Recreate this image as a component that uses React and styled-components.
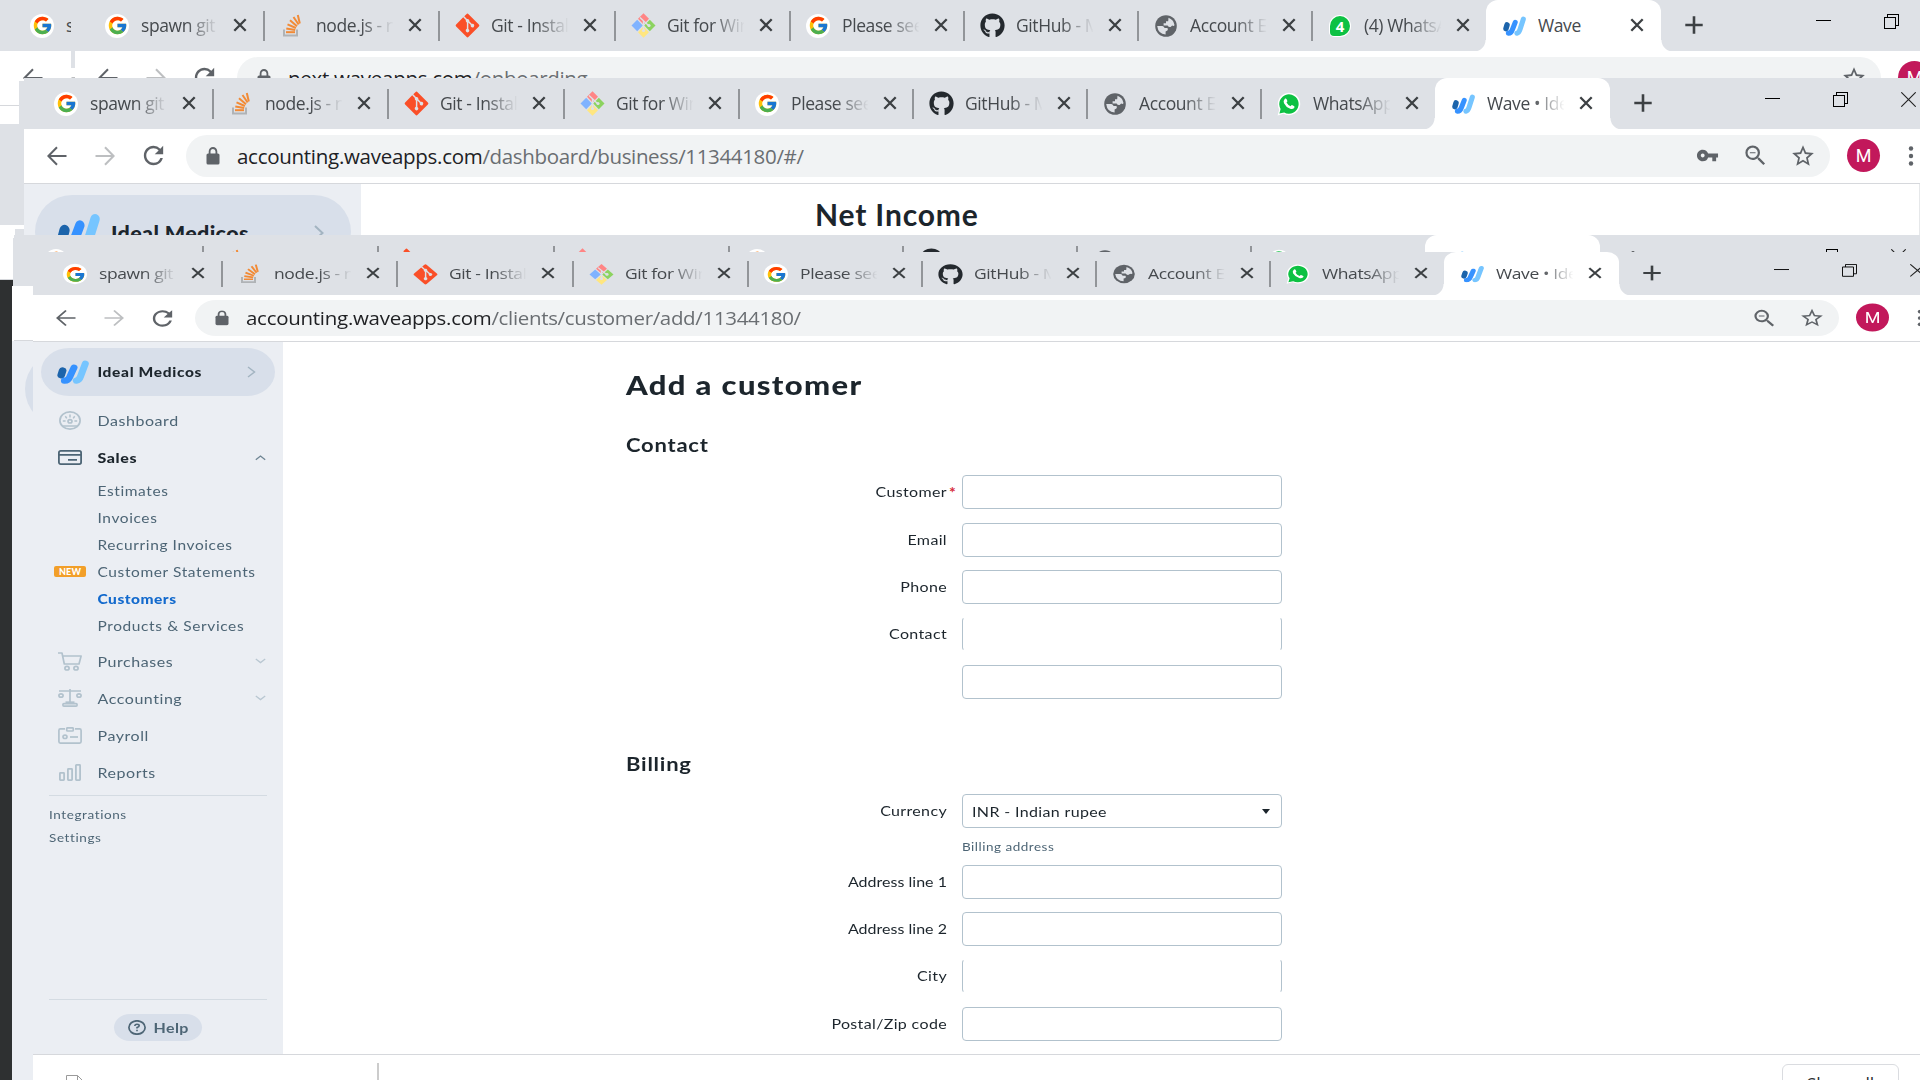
import React from "react";
import styled, { createGlobalStyle, css, ThemeProvider } from "styled-components";
import { FcGoogle } from "react-icons/fc";
import { FaGitAlt, FaGithub } from "react-icons/fa";
import { MdVpnKey, MdZoomOut, MdStarOutline, MdRefresh } from "react-icons/md";

const Global = createGlobalStyle`
  *, *::before, *::after { box-sizing: border-box; }
  body { margin: 0; background: #2e3031; }
`;

const UI = `"Open Sans", "Noto Sans", sans-serif`;
const BRAND = `Lato, "Open Sans", sans-serif`;

const tall = { k: 1, strip: 51, bar: 54, pill: 42, sepTop: 11, sepH: 30, ctlTop: 14 };
const squat = { k: 0.85, strip: 43, bar: 46, pill: 36, sepTop: 9, sepH: 26, ctlTop: 12 };

/* ---------- desktop and window frames ---------- */

const Desktop = styled.div`
  position: relative;
  width: 1920px;
  height: 1080px;
  overflow: hidden;
  background: #2e3031;
  font-family: ${UI};
`;

const Frame = styled.section`
  position: absolute;
  left: ${(p) => p.$x}px;
  top: ${(p) => p.$y}px;
  width: 1920px;
  height: ${(p) => p.$h}px;
  display: flex;
  flex-direction: column;
  background: #fff;
`;

const Edge = styled.i`
  position: absolute;
  left: ${(p) => p.$x}px;
  top: ${(p) => p.$y}px;
  width: ${(p) => p.$w}px;
  height: ${(p) => p.$h}px;
  background: ${(p) => p.$c || "#dee1e6"};
`;

const BackStrip = styled.div`
  height: 101px;
  background: #dee1e6;
`;
const BackBar = styled.div`
  height: 55px;
  background: #fff;
  border-bottom: 1px solid #d6d8dc;
`;

/* ---------- tab strip ---------- */

const Strip = styled.div`
  flex: none;
  display: flex;
  height: ${(p) => p.theme.strip}px;
  padding-left: 14px;
  background: #dee1e6;
`;

const Tab = styled.div`
  position: relative;
  flex: none;
  display: flex;
  align-items: center;
  width: ${(p) => p.$w}px;
  height: 100%;
  padding-left: 16px;
  ${(p) =>
    p.$active
      ? css`
          background: #fff;
          border-radius: 12px 12px 0 0 / ${12 * p.theme.k}px ${12 * p.theme.k}px 0 0;
          &::before,
          &::after {
            content: "";
            position: absolute;
            bottom: 0;
            width: 12px;
            height: 11px;
          }
          &::before {
            left: -12px;
            background: radial-gradient(circle at 0 0, transparent 11px, #fff 12px);
          }
          &::after {
            right: -12px;
            background: radial-gradient(circle at 100% 0, transparent 11px, #fff 12px);
          }
        `
      : ""}
`;

const Separator = styled.span`
  position: absolute;
  right: -1px;
  top: ${(p) => p.theme.sepTop}px;
  width: 2px;
  height: ${(p) => p.theme.sepH}px;
  background: #929599;
`;

const Glyph = styled.span`
  flex: none;
  display: flex;
  align-items: center;
  justify-content: center;
  width: ${(p) => p.$s || 24}px;
  height: ${(p) => p.$s || 24}px;
  color: ${(p) => p.$c || "#5f6368"};
  transform: scaleY(${(p) => p.theme.k});
  svg {
    display: block;
    flex: none;
  }
`;

const Disc = styled(Glyph)`
  background: #fff;
  border-radius: 50%;
`;

const Title = styled.span`
  flex: none;
  width: 77px;
  height: 26px;
  margin: -2px 0 0 12px;
  overflow: hidden;
  white-space: nowrap;
  font-size: 17.5px;
  line-height: 26px;
  letter-spacing: -0.4px;
  color: #45494d;
  transform: scaleY(${(p) => p.theme.k});
  mask-image: ${(p) => (p.$full ? "none" : "linear-gradient(90deg, #000 58%, transparent 101%)")};
`;

const CloseSlot = styled(Glyph)`
  margin: -1px 8px 0 13px;
`;

const NewTab = styled(Glyph)`
  margin: -1px 0 0 21px;
  align-self: center;
`;

const Controls = styled.div`
  display: flex;
  align-items: flex-start;
  margin-left: 110px;
  padding-top: ${(p) => p.theme.ctlTop}px;
  gap: 53px;
  svg {
    display: block;
    height: ${(p) => 15 * p.theme.k}px;
  }
`;

/* ---------- toolbar ---------- */

const Toolbar = styled.div`
  flex: none;
  display: flex;
  align-items: center;
  height: ${(p) => p.theme.bar + 1}px;
  padding: 0 0 1px 21px;
  background: #fff;
  border-bottom: 1px solid #d6d8dc;
`;

const NavButtons = styled.div`
  display: flex;
  gap: 24px;
  width: 141px;
`;

const Address = styled.div`
  display: flex;
  align-items: center;
  width: 1644px;
  height: ${(p) => p.theme.pill}px;
  padding: 0 15px 0 15px;
  background: #f1f3f4;
  border-radius: 21px / ${(p) => p.theme.pill / 2}px;
`;

const Url = styled.span`
  flex: 1;
  margin-left: 12px;
  white-space: nowrap;
  font-size: 20.5px;
  line-height: 30px;
  letter-spacing: -0.34px;
  color: #6a6e72;
  transform: scaleY(${(p) => p.theme.k});
  transform-origin: 0 50%;
  b {
    font-weight: 400;
    letter-spacing: -0.28px;
    color: #202124;
  }
`;

const AddressTools = styled.div`
  display: flex;
  gap: 24px;
`;

const Avatar = styled.span`
  flex: none;
  width: 33px;
  height: 33px;
  margin-left: 17px;
  border-radius: 50%;
  background: #c2185b;
  color: #fff;
  font: 400 18px/33px Roboto, sans-serif;
  text-align: center;
  transform: scaleY(${(p) => p.theme.k});
`;

const Menu = styled(Glyph)`
  margin-left: 19px;
`;

/* ---------- drawings ---------- */

const WaveLogo = ({ w, h }) => (
  <svg width={w} height={h} viewBox="0 0 32 27" preserveAspectRatio="none">
    <path d="M5.6 12 L4.2 17" stroke="#1c64ab" strokeWidth="7.6" strokeLinecap="round" fill="none" />
    <path d="M17 8.6 L13 18.5 Q11.3 23.4 7.4 23.2" stroke="#3692ff" strokeWidth="7" strokeLinecap="round" fill="none" />
    <path d="M28.3 4.2 L23.6 18.3 Q22.3 22.6 19.3 23.2" stroke="#76c5ff" strokeWidth="7" strokeLinecap="round" fill="none" />
  </svg>
);

const StackLogo = () => (
  <svg width="20" height="24" viewBox="0 0 20 24">
    <path d="M2 15.5 V21.5 H15 V15.5" fill="none" stroke="#b0b3b6" strokeWidth="2" />
    <g stroke="#f28a35" strokeWidth="2" fill="none">
      <path d="M4 18.2 H13" />
      <path d="M4.3 14.4 L13.2 16" />
      <path d="M5.5 10.4 L13.9 14" />
      <path d="M8 6.3 L15 12.3" />
      <path d="M11.5 3 L16.6 10.5" />
      <path d="M15.8 1 L17.8 9.5" />
    </g>
  </svg>
);

const GitWinLogo = () => (
  <svg width="25" height="25" viewBox="0 0 25 25">
    <path d="M12.5 0.3 L18 5.8 L12.5 11.5 L7 5.8 Z" fill="#ff8585" />
    <path d="M6.2 6.8 L11.8 12.5 L6.2 18.2 L0.5 12.5 Z" fill="#80b3ff" />
    <path d="M18.8 6.8 L24.5 12.5 L18.8 18.2 L13.2 12.5 Z" fill="#8cd35f" />
    <path d="M12.5 13.5 L18 19.2 L12.5 24.7 L7 19.2 Z" fill="#ffe680" />
    <path d="M9 4.5 L18 13 M12.5 8 V18" stroke="#dee1e6" strokeWidth="1.4" />
    <circle cx="12.5" cy="17.5" r="1.6" fill="#dee1e6" />
    <circle cx="18" cy="12.5" r="1.6" fill="#dee1e6" />
  </svg>
);

const Globe = () => (
  <svg width="24" height="24" viewBox="0 0 24 24">
    <circle cx="12" cy="12" r="10.8" fill="#5f6368" />
    <path
      d="M14.5 3.8 Q19.6 5.6 20.5 11 Q20 12.4 18.2 11.6 L16.6 13 Q14.6 13.4 13.6 11.4 H9.6 V9.2 H12 V7.2 H14.2 Z"
      fill="#dee1e6"
    />
    <path d="M3.2 12 H8.4 Q10.2 12.4 10.6 14 H13.4 Q14.4 15 13.4 16.6 L11.6 17.4 V20.6 Q4.2 20 3.2 12 Z" fill="#dee1e6" />
  </svg>
);

const ChatLogo = () => (
  <svg width="24" height="24" viewBox="0 0 24 24">
    <path d="M0.6 23.4 L2.2 17.4 A11.2 11.2 0 1 1 6.6 21.8 Z" fill="#fff" />
    <path d="M2.4 21.6 L3.6 17 A9.7 9.7 0 1 1 7.2 20.5 Z" fill="#0dc143" />
    <path
      d="M8 6.6 Q8.8 6 9.5 7 L10.4 9 Q10.4 9.8 9.5 10.6 Q10.9 13.2 13.6 14.3 Q14.4 13.1 15 13.1 L17.3 14.3 Q17.9 15.1 16.9 16.2 Q15.4 17.5 13.2 16.7 Q8.9 15.2 7 11.2 Q6.1 8.6 8 6.6 Z"
      fill="#fff"
    />
  </svg>
);

const Lock = () => (
  <svg width="14" height="18" viewBox="0 0 14 18">
    <rect x="0.5" y="6.5" width="13" height="11" rx="1.6" fill="#5f6368" />
    <path d="M3.6 7 V4.4 A3.4 3.4 0 0 1 10.4 4.4 V7" fill="none" stroke="#5f6368" strokeWidth="1.8" />
  </svg>
);

const CountBubble = styled.span`
  display: flex;
  align-items: center;
  justify-content: center;
  width: 20px;
  height: 20px;
  border-radius: 50% 50% 50% 4px;
  background: #0dc143;
  box-shadow: 0 0 0 1px #fff;
  color: #fff;
  font: 700 15px/20px "Open Sans", sans-serif;
`;

const Cross = () => (
  <svg width="14" height="14" viewBox="0 0 14 14">
    <path d="M1.3 1.3 L12.7 12.7 M12.7 1.3 L1.3 12.7" stroke="#3c4043" strokeWidth="2.3" />
  </svg>
);

const Plus = () => (
  <svg width="18" height="18" viewBox="0 0 18 18">
    <path d="M9 0.3 V17.7 M0.3 9 H17.7" stroke="#3c4043" strokeWidth="2.6" />
  </svg>
);

const Arrow = ({ back }) => (
  <svg width="20" height="20" viewBox="0 0 20 20">
    <path
      d={back ? "M19.5 10 H1.5 M10 1.2 L1.4 10 L10 18.8" : "M0.5 10 H18.5 M10 1.2 L18.6 10 L10 18.8"}
      fill="none"
      stroke={back ? "#5f6368" : "#bdbfc1"}
      strokeWidth="2"
    />
  </svg>
);

const Dots = () => (
  <svg width="6" height="20" viewBox="0 0 6 20">
    <circle cx="3" cy="2.5" r="2.2" fill="#5f6368" />
    <circle cx="3" cy="10" r="2.2" fill="#5f6368" />
    <circle cx="3" cy="17.5" r="2.2" fill="#5f6368" />
  </svg>
);

const WinControls = () => (
  <Controls>
    <svg width="15" viewBox="0 0 15 15" preserveAspectRatio="none" shapeRendering="crispEdges">
      <path d="M0 6.5 H15" stroke="#000" />
    </svg>
    <svg width="15" viewBox="0 0 15 15" preserveAspectRatio="none" shapeRendering="crispEdges">
      <path d="M0.5 3.5 H11.5 V14.5 H0.5 Z M3.5 3.5 V0.5 H14.5 V11.5 H11.5" fill="none" stroke="#000" />
    </svg>
    <svg width="15" viewBox="0 0 15 15" preserveAspectRatio="none">
      <path d="M0.3 0.3 L14.7 14.7 M14.7 0.3 L0.3 14.7" stroke="#222" strokeWidth="1.1" />
    </svg>
  </Controls>
);

/* ---------- browser chrome ---------- */

const baseTabs = [
  { w: 175, title: "spawn git", icon: "google" },
  { w: 175, title: "node.js - n", icon: "stack" },
  { w: 176, title: "Git - Install", icon: "git" },
  { w: 175, title: "Git for Win", icon: "gitwin" },
  { w: 174, title: "Please see", icon: "google" },
  { w: 174, title: "GitHub - M", icon: "github" },
  { w: 174, title: "Account E", icon: "globe" },
];

const favicons = {
  google: <Disc><FcGoogle size={21} /></Disc>,
  stack: <Glyph><StackLogo /></Glyph>,
  git: <Glyph $c="#fa4f28"><FaGitAlt size={27} /></Glyph>,
  gitwin: <Glyph><GitWinLogo /></Glyph>,
  github: <Glyph $c="#24292e"><FaGithub size={25} /></Glyph>,
  globe: <Glyph><Globe /></Glyph>,
  whatsapp: <Glyph><ChatLogo /></Glyph>,
  count: <Glyph><CountBubble>4</CountBubble></Glyph>,
  wave: <Glyph><WaveLogo w={23} h={20} /></Glyph>,
};

const BackTools = () => (
  <NavButtons>
    <Glyph><Arrow back /></Glyph>
    <Glyph><Arrow /></Glyph>
    <Glyph><MdRefresh size={29} /></Glyph>
  </NavButtons>
);

function Chrome({ host, path, chat = "WhatsApp", chatIcon = "whatsapp", current = "Wave • Ideal", tools, bare }) {
  const tabs = [...baseTabs, { w: 174, title: chat, icon: chatIcon, last: true }];
  return (
    <>
      <Strip>
        {tabs.map((t, i) => (
          <Tab key={i} $w={t.w}>
            {favicons[t.icon]}
            <Title>{!bare && t.title}</Title>
            <CloseSlot $s={18}><Cross /></CloseSlot>
            {!t.last && <Separator />}
          </Tab>
        ))}
        <Tab $w={175} $active>
          {favicons.wave}
          <Title $full={current === "Wave"}>{!bare && current}</Title>
          <CloseSlot $s={18}><Cross /></CloseSlot>
        </Tab>
        <NewTab><Plus /></NewTab>
        <WinControls />
      </Strip>
      <Toolbar>
        {!bare && (
          <>
            <BackTools />
            <Address>
              <Glyph><Lock /></Glyph>
              <Url><b>{host}</b>{path}</Url>
              <AddressTools>
                {tools.includes("key") && <Glyph><MdVpnKey size={23} /></Glyph>}
                {tools.includes("zoom") && <Glyph><MdZoomOut size={27} /></Glyph>}
                <Glyph><MdStarOutline size={26} /></Glyph>
              </AddressTools>
            </Address>
            <Avatar>M</Avatar>
            <Menu><Dots /></Menu>
          </>
        )}
      </Toolbar>
    </>
  );
}

const SliverTitle = styled(Title)`
  width: 5px;
  mask-image: none;
`;

/* ---------- dashboard page ---------- */

const DashBody = styled.div`
  flex: 1;
  display: flex;
`;
const DashSide = styled.div`
  width: 337px;
  padding: 11px 10px 0 11px;
  background: #ebeef3;
`;
const DashPill = styled.div`
  display: flex;
  align-items: center;
  height: 74px;
  padding: 0 27px 0 22px;
  border-radius: 37px;
  background: #d8dfea;
`;
const DashName = styled.span`
  flex: 1;
  padding: 2px 0 0 11px;
  white-space: nowrap;
  font: 900 21.5px/30px ${BRAND};
  letter-spacing: 0.35px;
  color: #1c252c;
`;
const DashLogo = styled.span`
  padding-top: 6px;
`;
const DashChevron = styled.span`
  padding-top: 6px;
`;
const DashMain = styled.div`
  flex: 1;
  padding: 8px 0 0 454px;
`;
const NetIncome = styled.div`
  font: 700 30px/44px ${BRAND};
  letter-spacing: 0.85px;
  color: #1c252c;
`;

function Dashboard({ bare }) {
  return (
    <DashBody>
      <DashSide>
        <DashPill>
          {!bare && (
            <>
              <DashLogo><WaveLogo w={43} h={39} /></DashLogo>
              <DashName>Ideal Medicos</DashName>
              <DashChevron>
                <svg width="10" height="16" viewBox="0 0 10 16">
                  <path d="M1 1 L8.5 8 L1 15" fill="none" stroke="#a3b4c1" strokeWidth="2" />
                </svg>
              </DashChevron>
            </>
          )}
        </DashPill>
      </DashSide>
      <DashMain>{!bare && <NetIncome>Net Income</NetIncome>}</DashMain>
    </DashBody>
  );
}

/* ---------- customer page ---------- */

const Page = styled.div`
  flex: none;
  display: flex;
  height: 712px;
  background: #fff;
`;

const Side = styled.nav`
  display: flex;
  flex-direction: column;
  width: 250px;
  padding: 6px 8px 0;
  background: #ebeef3;
  font-family: ${BRAND};
  color: #4d6575;
`;

const Text = styled.span`
  display: inline-block;
  white-space: nowrap;
  transform: scaleY(0.85);
`;

const BizPill = styled.div`
  flex: none;
  display: flex;
  align-items: center;
  height: 48px;
  margin-bottom: 6px;
  padding: 0 19px 0 16px;
  border-radius: 28px / 24px;
  background: #d8dfea;
  svg { display: block; }
`;
const BizName = styled(Text)`
  flex: 1;
  margin-left: 8.5px;
  font-size: 15.5px;
  font-weight: 900;
  letter-spacing: 0.65px;
  color: #1c252c;
`;

const NavRow = styled.div`
  flex: none;
  display: flex;
  align-items: center;
  height: 37.1px;
  padding: 0 9px 0 16px;
  font-size: 16px;
  letter-spacing: ${(p) => (p.$on ? 0.6 : 0.55)}px;
  font-weight: ${(p) => (p.$on ? 900 : 400)};
  color: ${(p) => (p.$on ? "#1c252c" : "#4d6575")};
  svg { display: block; }
`;
const NavIcon = styled.span`
  display: flex;
  justify-content: center;
  width: 26px;
  color: ${(p) => (p.$on ? "#4d6575" : "#b2c2cd")};
`;
const NavLabel = styled(Text)`
  flex: 1;
  margin-left: 14.5px;
`;

const SubList = styled.div`
  flex: none;
  margin: 1px 0 3.5px;
`;
const SubRow = styled.div`
  display: flex;
  align-items: center;
  height: 27px;
  font-size: 15.5px;
  letter-spacing: ${(p) => (p.$on ? 0.5 : 0.6)}px;
  font-weight: ${(p) => (p.$on ? 900 : 400)};
  color: ${(p) => (p.$on ? "#136acd" : "#4d6575")};
`;
const BadgeSlot = styled.span`
  display: flex;
  width: 56.5px;
  padding-left: 13px;
`;
const Badge = styled.span`
  width: 32px;
  height: 11px;
  border-radius: 2px;
  background: #f29f29;
  color: #fff;
  font-size: 9px;
  font-weight: 900;
  line-height: 11.5px;
  text-align: center;
  letter-spacing: 0.2px;
`;

const Rule = styled.hr`
  flex: none;
  width: 218px;
  height: 1px;
  margin: ${(p) => p.$top}px 8px 8px;
  border: 0;
  background: #d4dbe2;
`;
const MinorLink = styled.div`
  height: 23px;
  padding-left: 8px;
  font-size: 13.5px;
  line-height: 23px;
  letter-spacing: 0.6px;
`;
const Spacer = styled.div`
  flex: 1;
`;
const HelpButton = styled.div`
  flex: none;
  display: flex;
  align-items: center;
  align-self: center;
  width: 88px;
  height: 27px;
  margin: 6px 0 13px;
  padding-left: 14px;
  border-radius: 16px / 13.5px;
  background: #d8dfea;
  font-size: 16px;
  font-weight: 700;
  letter-spacing: 0.4px;
  gap: 7.5px;
`;

const Content = styled.main`
  flex: 1;
  padding: 25px 0 0 343px;
  font-family: ${BRAND};
  color: #1c252c;
`;
const H1 = styled.h1`
  height: 36px;
  margin: 0 0 27px;
  font-size: 31px;
  font-weight: 900;
  line-height: 36px;
  letter-spacing: 1.35px;
`;
const H2 = styled.h2`
  height: 30px;
  margin: ${(p) => p.$top || 0}px 0 ${(p) => p.$bottom}px;
  font-size: 22px;
  font-weight: 700;
  line-height: 30px;
  letter-spacing: 0.75px;
`;
const Row = styled.div`
  display: grid;
  grid-template-columns: 321px 320px;
  column-gap: 15px;
  height: ${(p) => p.$pitch}px;
`;
const Label = styled.label`
  position: relative;
  height: 34px;
  font-size: 16px;
  line-height: 33px;
  letter-spacing: ${(p) => (p.$tight ? 0.02 : 0.35)}px;
  text-align: right;
`;
const Star = styled.em`
  position: absolute;
  left: 100%;
  top: 0;
  margin-left: 2px;
  font-style: normal;
  font-weight: 700;
  color: #d62d3a;
`;
const Field = styled.div`
  display: flex;
  align-items: center;
  justify-content: space-between;
  height: 34px;
  padding: 0 11px 0 9px;
  border: 1px solid #b2c2cd;
  border-radius: 4px;
  font-size: 16px;
  letter-spacing: 0.35px;
  ${(p) =>
    p.$open &&
    css`
      border-top-color: transparent;
      border-bottom-color: transparent;
    `}
`;
const Hint = styled.div`
  grid-column: 2;
  font-size: 13.5px;
  line-height: 18px;
  letter-spacing: 0.5px;
  color: #4d6575;
`;

const Shelf = styled.footer`
  flex: none;
  display: flex;
  justify-content: space-between;
  height: 60px;
  border-top: 1px solid #d6d8dc;
  background: #fff;
`;
const Download = styled.div`
  display: flex;
  width: 346px;
  height: 46px;
  margin-top: 8px;
  padding: 12px 0 0 33px;
  border-right: 2px solid #ccc;
`;
const ShelfEnd = styled.div`
  margin: 9px 54px 0 0;
`;
const ShowAll = styled.div`
  width: 117px;
  height: 40px;
  border: 1px solid #dadce0;
  border-radius: 6px;
  font: 500 17.5px/38px ${UI};
  color: #2b2e31;
  text-align: center;
`;

const icons = {
  dash: (
    <svg width="22" height="19" viewBox="0 0 22 19" fill="none" stroke="currentColor" strokeWidth="1.7">
      <ellipse cx="11" cy="9.5" rx="10.1" ry="8.6" />
      <ellipse cx="11" cy="10.3" rx="2" ry="1.7" />
      <path d="M3.5 15 H18.5 M11 3.6 V6.6 M6.3 5.3 L7.8 7.4 M15.7 5.3 L14.2 7.4 M3.8 10 H6.6 M18.2 10 H15.4" strokeWidth="1.5" />
    </svg>
  ),
  card: (
    <svg width="24" height="15" viewBox="0 0 24 15" fill="none" stroke="currentColor" strokeWidth="1.8">
      <rect x="0.9" y="0.9" width="22.2" height="13.2" rx="1.8" />
      <path d="M1 4.8 H23 M10 9.8 H19" />
    </svg>
  ),
  cart: (
    <svg width="24" height="19" viewBox="0 0 24 19" fill="none" stroke="currentColor" strokeWidth="1.7">
      <path d="M0 1 H4 L6.3 12 H21 L23.1 4 H5" strokeLinejoin="round" />
      <ellipse cx="9" cy="16.2" rx="2.1" ry="1.8" />
      <ellipse cx="18" cy="16.2" rx="2.1" ry="1.8" />
    </svg>
  ),
  scale: (
    <svg width="24" height="18" viewBox="0 0 24 18" fill="none" stroke="currentColor" strokeWidth="1.7">
      <path d="M1 2 H23 M12 0 V13" />
      <ellipse cx="3" cy="6.5" rx="2.1" ry="1.7" />
      <ellipse cx="21" cy="6.5" rx="2.1" ry="1.7" />
      <path d="M7.5 13.2 H16.5" />
      <rect x="4.9" y="14.7" width="14.2" height="2.4" rx="1" />
    </svg>
  ),
  badge: (
    <svg width="24" height="17" viewBox="0 0 24 17" fill="none" stroke="currentColor" strokeWidth="1.7">
      <path d="M7 1.9 H2.4 Q0.9 1.9 0.9 3.4 V14.6 Q0.9 16.1 2.4 16.1 H21.6 Q23.1 16.1 23.1 14.6 V3.4 Q23.1 1.9 21.6 1.9 H17" />
      <rect x="8.7" y="0.8" width="6.6" height="3.2" rx="1" />
      <ellipse cx="7" cy="9.8" rx="2" ry="1.7" />
      <path d="M12 10 H20" />
    </svg>
  ),
  bars: (
    <svg width="22" height="17" viewBox="0 0 22 17" fill="none" stroke="currentColor" strokeWidth="1.8">
      <rect x="0.9" y="8.9" width="4.2" height="7.2" rx="0.5" />
      <rect x="8.9" y="4.9" width="4.2" height="11.2" rx="0.5" />
      <rect x="16.9" y="0.9" width="4.2" height="15.2" rx="0.5" />
    </svg>
  ),
};

const Caret = ({ up }) => (
  <svg width="11" height="6" viewBox="0 0 11 6">
    <path
      d={up ? "M0.8 4.8 L5.5 1 L10.2 4.8" : "M0.8 1 L5.5 4.6 L10.2 1"}
      fill="none"
      stroke={up ? "#6f8593" : "#b9c7d1"}
      strokeWidth="1.3"
    />
  </svg>
);

const NavItem = ({ icon, label, on, caret }) => (
  <NavRow $on={on}>
    <NavIcon $on={on}>{icons[icon]}</NavIcon>
    <NavLabel>{label}</NavLabel>
    {caret && <Caret up={caret === "up"} />}
  </NavRow>
);

const subs = [
  "Estimates",
  "Invoices",
  "Recurring Invoices",
  "Customer Statements",
  "Customers",
  "Products & Services",
];

const FormRow = ({ label, pitch, required, open, tight, children }) => (
  <Row $pitch={pitch}>
    <Label $tight={tight}>
      <Text>{label}</Text>
      {required && <Star>*</Star>}
    </Label>
    <Field $open={open}>{children}</Field>
  </Row>
);

function CustomerPage() {
  return (
    <>
      <Page>
        <Side>
          <BizPill>
            <WaveLogo w={32} h={24} />
            <BizName>Ideal Medicos</BizName>
            <svg width="9" height="12" viewBox="0 0 9 12">
              <path d="M1 1 L7.5 6 L1 11" fill="none" stroke="#a3b4c1" strokeWidth="1.5" />
            </svg>
          </BizPill>
          <NavItem icon="dash" label="Dashboard" />
          <NavItem icon="card" label="Sales" on caret="up" />
          <SubList>
            {subs.map((s) => (
              <SubRow key={s} $on={s === "Customers"}>
                <BadgeSlot>{s === "Customer Statements" && <Badge>NEW</Badge>}</BadgeSlot>
                <Text>{s}</Text>
              </SubRow>
            ))}
          </SubList>
          <NavItem icon="cart" label="Purchases" caret="down" />
          <NavItem icon="scale" label="Accounting" caret="down" />
          <NavItem icon="badge" label="Payroll" />
          <NavItem icon="bars" label="Reports" />
          <Rule $top={3.5} />
          <MinorLink><Text>Integrations</Text></MinorLink>
          <MinorLink><Text>Settings</Text></MinorLink>
          <Spacer />
          <Rule $top={2} />
          <HelpButton>
            <svg width="18" height="15" viewBox="0 0 18 15" fill="none" stroke="#4d6575">
              <ellipse cx="9" cy="7.5" rx="8.1" ry="6.7" strokeWidth="1.7" />
              <path d="M6.8 6 Q6.9 4.2 9 4.2 Q11.2 4.2 11.2 5.8 Q11.2 6.9 9 7.6 V8.6 M9 9.8 V11.2" strokeWidth="1.6" />
            </svg>
            <Text>Help</Text>
          </HelpButton>
        </Side>
        <Content>
          <H1><Text>Add a customer</Text></H1>
          <H2 $bottom={15}><Text>Contact</Text></H2>
          <FormRow label="Customer" pitch={48} required />
          <FormRow label="Email" pitch={47} />
          <FormRow label="Phone" pitch={47} />
          <FormRow label="Contact" pitch={48} open />
          <FormRow label="" pitch={34} />
          <H2 $top={50} $bottom={15}><Text>Billing</Text></H2>
          <FormRow label="Currency" pitch={44}>
            <Text>INR - Indian rupee</Text>
            <svg width="8" height="5" viewBox="0 0 8 5">
              <path d="M0 0 H8 L4 5 Z" fill="#1c252c" />
            </svg>
          </FormRow>
          <Row $pitch={27}><Hint><Text>Billing address</Text></Hint></Row>
          <FormRow label="Address line 1" pitch={47} tight />
          <FormRow label="Address line 2" pitch={47} tight />
          <FormRow label="City" pitch={48} open />
          <FormRow label="Postal/Zip code" pitch={34} />
        </Content>
      </Page>
      <Shelf>
        <Download>
          <svg width="17" height="22" viewBox="0 0 17 22">
            <path d="M0.5 0.5 H11.5 L16.5 5.5 V21.5 H0.5 Z M11.5 0.5 V5.5 H16.5" fill="#fff" stroke="#9a9a9a" />
          </svg>
        </Download>
        <ShelfEnd>
          <ShowAll>Show all</ShowAll>
        </ShelfEnd>
      </Shelf>
    </>
  );
}

/* ---------- app ---------- */

export default function App() {
  return (
    <Desktop>
      <Global />
      <Frame $x={0} $y={124} $h={156}>
        <BackStrip />
        <BackBar />
      </Frame>
      <ThemeProvider theme={tall}>
        <Frame $x={0} $y={0} $h={124}>
          <Strip>
            <Tab $w={175}>
              {favicons.google}
              <SliverTitle>s</SliverTitle>
            </Tab>
          </Strip>
          <Toolbar>
            <BackTools />
          </Toolbar>
        </Frame>
        <Frame $x={75} $y={0} $h={124}>
          <Edge $x={-4} $y={0} $w={4} $h={68} />
          <Chrome
            host="next.waveapps.com"
            path="/onboarding"
            chat="(4) WhatsApp"
            chatIcon="count"
            current="Wave"
            tools={["star"]}
          />
        </Frame>
        <Frame $x={24} $y={78} $h={400}>
          <Edge $x={-5} $y={3} $w={5} $h={48} />
          <Chrome
            host="accounting.waveapps.com"
            path="/dashboard/business/11344180/#/"
            tools={["key", "zoom", "star"]}
          />
          <Dashboard />
          <Edge $x={1895} $y={106} $w={1} $h={60} $c="#e6e8ea" />
        </Frame>
        <Frame $x={14} $y={235} $h={845}>
          <Edge $x={1} $y={-6} $w={9} $h={6} />
          <Edge $x={-1} $y={3} $w={1} $h={48} />
          <Edge $x={-2} $y={51} $w={2} $h={55} $c="#fff" />
          <Edge $x={-2} $y={106} $w={2} $h={739} $c="#ebeef3" />
          <Chrome bare />
          <Dashboard bare />
        </Frame>
      </ThemeProvider>
      <ThemeProvider theme={squat}>
        <Frame $x={33} $y={252} $h={828}>
          <Chrome
            host="accounting.waveapps.com"
            path="/clients/customer/add/11344180/"
            tools={["zoom", "star"]}
          />
          <CustomerPage />
        </Frame>
      </ThemeProvider>
    </Desktop>
  );
}
